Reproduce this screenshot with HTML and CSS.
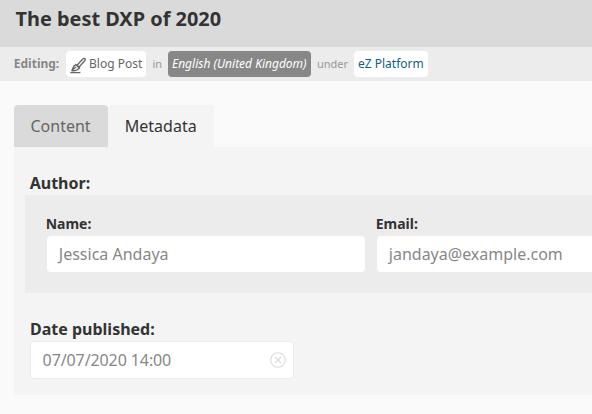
FILE: index.html
```html
<!DOCTYPE html>
<html lang="en">
<head>
<meta charset="utf-8">
<title>The best DXP of 2020</title>
<link rel="stylesheet" href="styles.css">
</head>
<body>
<header class="title-bar"><h1>The best DXP of 2020</h1></header>
<div class="meta-bar">
  <span class="meta-label">Editing:</span>
  <span class="tag tag-type">
    <svg class="brush" viewBox="0 0 16 17" fill="none" stroke="#666" stroke-width="1.3" stroke-linejoin="round" stroke-linecap="round">
      <path d="M7 8.2 12.8 2Q14.2.9 15 1.8 15.7 2.6 14.7 3.7L9.2 10Z"/>
      <path d="M5.6 7.4 9.6 11.2"/>
      <path d="M5.3 8C3 8.6 3 11.5 1.8 13.6 4.1 14 8.3 13.8 8.8 10.8M3 12.6 5.8 10.2"/>
      <path d="M.7 15.6H10" stroke-width="1.1"/>
    </svg>
    <span>Blog Post</span>
  </span>
  <span class="word word-in">in</span>
  <span class="tag tag-language">English (United Kingdom)</span>
  <span class="word word-under">under</span>
  <a class="tag tag-parent">eZ Platform</a>
</div>
<main>
  <nav class="tabs">
    <a class="tab">Content</a>
    <a class="tab tab-active">Metadata</a>
  </nav>
  <section class="panel">
    <h2 class="field-title">Author:</h2>
    <div class="author">
      <label class="field"><span class="field-label">Name:</span><span class="input">Jessica Andaya</span></label>
      <label class="field field-email"><span class="field-label">Email:</span><span class="input">jandaya@example.com</span></label>
    </div>
    <h2 class="field-title date-title">Date published:</h2>
    <div class="input date-input">
      <span>07/07/2020 14:00</span>
      <svg class="clear" viewBox="0 0 16 16" fill="none" stroke="#dadada" stroke-width="1.1"><circle cx="8" cy="8" r="7.3"/><path d="m5 5 6 6M11 5l-6 6"/></svg>
    </div>
  </section>
</main>
</body>
</html>
```
FILE: styles.css
```css
* { box-sizing: border-box; }
body {
  margin: 0;
  height: 414px;
  overflow: hidden;
  background: #fafafa;
  color: #333;
  font: 16px/24px "Noto Sans", sans-serif;
}
h1, h2 { margin: 0; font-weight: 700; }
.title-bar { height: 47px; padding: 6px 15.5px; background: #dadada; }
h1 { font-size: 19.9px; line-height: 26px; }
.meta-bar {
  display: flex;
  align-items: center;
  height: 34px;
  padding-left: 13.8px;
  background: #ececec;
  font-size: 12px;
  white-space: nowrap;
}
.meta-label { width: 52.2px; color: #878787; font-weight: 700; }
.tag {
  display: flex;
  align-items: center;
  height: 26px;
  padding: 0 4px;
  border-radius: 4px;
  background: #fff;
}
.tag-type { width: 80px; gap: 3px; color: #666; }
.brush { width: 16px; height: 17px; flex: none; margin-top: 3px; }
.word { color: #989898; font-size: 11px; }
.word-in { width: 22px; padding-left: 6.4px; }
.tag-language { width: 143px; background: #878787; color: #fff; font-style: italic; }
.word-under { width: 43px; padding-left: 6px; }
.tag-parent { width: 74px; color: #0f6080; }
main { padding: 24px 0 0 14px; }
.tabs { display: flex; }
.tab {
  display: flex;
  align-items: center;
  width: 94px;
  height: 42px;
  padding-left: 16.5px;
  border-radius: 4px 4px 0 0;
  background: #dadada;
  color: #666;
}
.tab-active { width: 106px; padding-left: 16.8px; background: #f4f4f4; color: #333; }
.panel { height: 248px; padding: 24px 0 0 11px; border-radius: 0 0 0 4px; background: #f4f4f4; }
.field-title { padding-left: 4.7px; font-size: 16px; line-height: 24px; }
.author {
  display: flex;
  gap: 12px;
  height: 98px;
  padding: 19px 0 0 22px;
  background: #ececec;
}
.field { flex: none; width: 318px; }
.field-email { flex: 1; width: auto; min-width: 0; }
.field-email .input { border-radius: 4px 0 0 4px; }
.field-label {
  display: block;
  height: 22px;
  margin-left: -1.3px;
  font-size: 14px;
  font-weight: 700;
  line-height: 20px;
}
.input {
  display: flex;
  align-items: center;
  height: 36px;
  padding: 0 12px 0 11.8px;
  border-radius: 4px;
  background: #fff;
  color: #878787;
}
.date-title { padding-top: 24px; padding-left: 5px; }
.date-input {
  justify-content: space-between;
  width: 264px;
  height: 38px;
  margin-left: 5px;
  padding: 0 7px 0 11.6px;
  border: 1px solid #ececec;
  letter-spacing: -.1px;
}
.clear { width: 16px; height: 16px; }
```
